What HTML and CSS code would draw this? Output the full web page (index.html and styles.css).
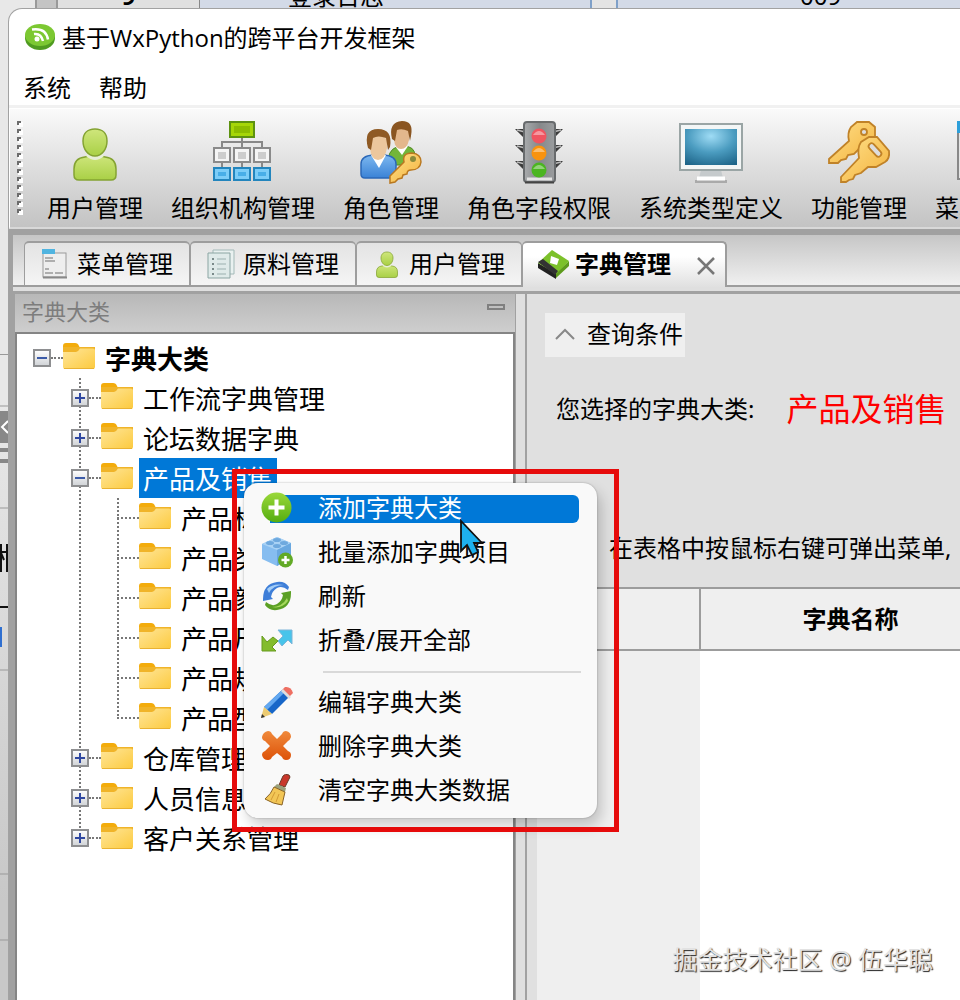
FILE: index.html
```html
<!DOCTYPE html>
<html lang="zh-CN">
<head>
<meta charset="utf-8">
<title>基于WxPython的跨平台开发框架</title>
<link rel="stylesheet" href="styles.css">
</head>
<body>
<svg class="defs" width="0" height="0" aria-hidden="true">
  <defs>
    <linearGradient id="gFolder" x1="0" y1="0" x2="1" y2="1"><stop offset="0" stop-color="#ffe69a"/><stop offset="1" stop-color="#fcca3e"/></linearGradient>
    <linearGradient id="gGreen" x1="0" y1="0" x2="0" y2="1"><stop offset="0" stop-color="#cfe67c"/><stop offset="1" stop-color="#a9d046"/></linearGradient>
    <linearGradient id="gBox" x1="0" y1="0" x2="0" y2="1"><stop offset="0" stop-color="#fff"/><stop offset="1" stop-color="#cfd2d6"/></linearGradient>
    <linearGradient id="gKey" x1="0" y1="0" x2="1" y2="1"><stop offset="0" stop-color="#ffe08a"/><stop offset="1" stop-color="#f3b23c"/></linearGradient>
    <radialGradient id="gScreen" cx=".5" cy=".2" r=".9"><stop offset="0" stop-color="#9fdcf5"/><stop offset=".5" stop-color="#4b9cc0"/><stop offset="1" stop-color="#1d6488"/></radialGradient>
    <linearGradient id="gBlue" x1="0" y1="0" x2="0" y2="1"><stop offset="0" stop-color="#7db8f0"/><stop offset="1" stop-color="#3a82d6"/></linearGradient>
    <linearGradient id="gAdd" x1="0" y1="0" x2="0" y2="1"><stop offset="0" stop-color="#9ad83a"/><stop offset="1" stop-color="#55ad10"/></linearGradient>
    <linearGradient id="gOrange" x1="0" y1="0" x2="0" y2="1"><stop offset="0" stop-color="#f08a3c"/><stop offset="1" stop-color="#dd5208"/></linearGradient>
    <linearGradient id="gMetal" x1="0" y1="0" x2="1" y2="0"><stop offset="0" stop-color="#a9abad"/><stop offset=".5" stop-color="#85888a"/><stop offset="1" stop-color="#9b9d9f"/></linearGradient>
    <pattern id="gripDots" width="6" height="8" patternUnits="userSpaceOnUse"><rect x="1" y="1" width="5" height="5" fill="#fff"/><path d="M0 0h4v2H2v2H0z" fill="#6c6c6c"/></pattern>
    <symbol id="folder" viewBox="0 0 32 27"><path d="M0 3q0-3 3-3h9q3 0 4 3l1 2H0z" fill="#f3ac0c"/><path d="M0 4h32v18H0z" fill="#f0b429"/><path d="M0 9h13q2 0 4-3.500h13q2 0 2 2V24q0 2-2 2H2q-2 0-2-2z" fill="url(#gFolder)"/><path d="M1 25.500h30" stroke="#e9b233"/></symbol>
    <symbol id="plus" viewBox="0 0 18 18"><rect x="1" y="1" width="16" height="16" fill="url(#gBox)" stroke="#8e8f91" stroke-width="2"/><path d="M4 9h10M9 4v10" stroke="#3048a0" stroke-width="2"/></symbol>
    <symbol id="minus" viewBox="0 0 18 18"><rect x="1" y="1" width="16" height="16" fill="url(#gBox)" stroke="#8e8f91" stroke-width="2"/><path d="M4 9h10" stroke="#3c5ba8" stroke-width="2"/></symbol>
    <symbol id="user" viewBox="0 0 64 64"><path d="M11 54V48Q11 37 22 36q2 0 4-2h12q2 2 4 2 11 1 11 12v6q0 5-5 5H16q-5 0-5-5z" fill="url(#gGreen)" stroke="#84a332" stroke-width="1.500"/><path d="M23 35q9 8 18 0l-2-5H25z" fill="#e8efd8"/><path d="M32 8c8 0 12 5 12 12 0 8-5 15-12 15s-12-7-12-15c0-7 4-12 12-12z" fill="url(#gGreen)" stroke="#84a332" stroke-width="1.500"/></symbol>
  </defs>
</svg>

<div class="desktop">
  <div class="behind" aria-hidden="true">
    <div class="behind-top">
      <div class="behind-rail"></div>
      <div class="behind-cell"><b>9</b></div>
      <div class="behind-sheet"><span>登录日志</span><i></i><span>009</span></div>
    </div>
    <svg class="behind-side" width="8" height="1000" viewBox="0 0 8 1000">
      <path d="M0 354.500h8M0 406h8M0 508h8M0 670h8M0 874h8M0 940h8" stroke="#999"/>
      <rect y="411" width="8" height="32" fill="#888"/><path d="M8 421l-6 6 6 6" stroke="#fff" stroke-width="2" fill="none"/>
      <path d="M0 450h8M0 461h8" stroke="#888" stroke-width="4"/>
      <path d="M0 552h4M1 544v28M1 553l3 7M4 552h4M7 544v28" stroke="#111" stroke-width="2" fill="none"/>
      <path d="M0 607h8" stroke="#111" stroke-width="2"/><rect y="627" width="2" height="20" fill="#2f6fd0"/>
    </svg>
  </div>

  <main class="window">
    <header class="titlebar">
      <svg width="32" height="28" viewBox="0 0 32 28"><ellipse cx="16" cy="15" rx="15" ry="12" fill="#4f9b20"/><ellipse cx="16" cy="12" rx="15" ry="11" fill="#7cc832"/><circle cx="13" cy="16" r="2.500" fill="#fff"/><path d="M10 11q7-1 9 7M8 6.500q14-2 16 10" fill="none" stroke="#fff" stroke-width="2.500"/></svg>
      <h1>基于WxPython的跨平台开发框架</h1>
    </header>
    <nav class="menubar"><button>系统</button><button>帮助</button></nav>

    <div class="toolbar">
      <svg class="grip" width="6" height="96"><rect width="6" height="96" fill="url(#gripDots)"/></svg>
      <button class="tool"><svg width="64" height="64"><use href="#user"/></svg>用户管理</button>
      <button class="tool"><svg width="64" height="64" viewBox="0 0 64 64">
        <path d="M31 16v30M11 46V21h40v25" fill="none" stroke="#888" stroke-width="2"/>
        <rect x="19" y="1" width="24" height="15" fill="#a6d608" stroke="#5d9210" stroke-width="2"/><rect x="23" y="5" width="16" height="7" fill="#8cbd00"/>
        <g fill="#f4f4f4" stroke="#8a8a8a" stroke-width="2"><rect x="3" y="27" width="16" height="14"/><rect x="23" y="27" width="16" height="14"/><rect x="43" y="27" width="16" height="14"/></g>
        <path d="M7 31h8v7H7zM27 31h8v7h-8zM47 31h8v7h-8z" fill="#ccc"/>
        <g fill="#7ccdf8" stroke="#2385bd" stroke-width="2"><rect x="3" y="47" width="16" height="12"/><rect x="23" y="47" width="16" height="12"/><rect x="43" y="47" width="16" height="12"/></g>
        <path d="M7 51h8v4H7zM27 51h8v4h-8zM47 51h8v4h-8z" fill="#48aee8"/></svg>组织机构管理</button>
      <button class="tool"><svg width="64" height="64" viewBox="0 0 64 64">
        <path d="M29 38q2-13 15-13 12 0 12 10v9H29z" fill="#73b53a" stroke="#4f8a24"/><path d="M36 25h13l-6 9z" fill="#fff"/>
        <path d="M35 10q9-6 15 0v9q-2 9-8 9t-7-9z" fill="#e3b78c"/><path d="M33 18Q29 1 43 0q12 0 9 15l-1 5-2-10q-6-3-11-1l-2 11z" fill="#8a5521"/>
        <path d="M2 53V43q0-8 12-9h11q12 1 12 9v10q0 4-4 4H6q-4 0-4-4z" fill="url(#gBlue)" stroke="#2b68b8" stroke-width="1.500"/><path d="M12 34h15l-7 13z" fill="#fff"/>
        <path d="M11 18q9-6 17 0v9q-2 12-9 12t-8-12z" fill="#ecc79d"/><path d="M9 27Q4 8 19 8q15 0 12 18l-2 3-2-12q-8-3-13 0l-2 12z" fill="#8f5a24"/>
        <path d="M31 55l14-14q-2-9 8-9 9 1 9 9-1 8-10 8-4 0-4 4l-4 1-1 3-4 1-3 3-5 1z" fill="url(#gKey)" stroke="#b97820" stroke-width="1.500"/><circle cx="54" cy="38" r="3" fill="#8a8a3a"/></svg>角色管理</button>
      <button class="tool"><svg width="64" height="64" viewBox="0 0 64 64">
        <path d="M8 8l11 0v11l-4-4zM8 24l11 0v11l-4-4zM8 40l11 0v11l-4-4zM56 8l-11 0v11l4-4zM56 24l-11 0v11l4-4zM56 40l-11 0v11l4-4z" fill="#3c3c3c"/><path d="M10 9l8 2M10 25l8 2M10 41l8 2M54 9l-8 2M54 25l-8 2M54 41l-8 2" stroke="#bbb" stroke-width="1.500"/>
        <rect x="17" y="1" width="31" height="60" rx="3" fill="url(#gMetal)" stroke="#686b6d" stroke-width="2"/><path d="M20 58h25" stroke="#e4e4e4" stroke-width="3"/><path d="M18 61.500h29" stroke="#444" stroke-width="2"/>
        <circle cx="32" cy="15" r="7.500" fill="#ef5561"/><circle cx="32" cy="32" r="7.500" fill="#f8930f"/><circle cx="32" cy="49" r="7.500" fill="#4bb521"/>
        <path d="M26 14q6-8 12 0zM26 31q6-8 12 0zM26 48q6-8 12 0z" fill="#fff" opacity=".4"/></svg>角色字段权限</button>
      <button class="tool"><svg width="64" height="64" viewBox="0 0 64 64"><path d="M22 49h20l2 8H20z" fill="#c5cacc"/><path d="M16 60.500h32" stroke="#aaa" stroke-width="3"/><path d="M18 57.500h28" stroke="#fff" stroke-width="4"/><rect x="1" y="3" width="62" height="46" fill="#f3f6f6" stroke="#9aa5a5" stroke-width="2"/><rect x="6" y="8" width="52" height="36" fill="url(#gScreen)"/></svg>系统类型定义</button>
      <button class="tool"><svg width="64" height="64" viewBox="0 0 64 64" fill="url(#gKey)" stroke="#c08228" stroke-width="1.800">
        <path d="M2 38l20-18q-2-8 2-14l6-5h12l6 5v12l-7 9h-8l-6 6-6 1-2 4-5 1-3 3H2z"/><circle cx="37" cy="11" r="3" fill="#ddd"/>
        <path d="M14 56l18-19q-2-10 2-16l8-5h8l12 14q1 8-4 11l-9 5h-8l-7 6-6 2-2 4-4 1-3 2h-5z"/><rect x="40" y="26" width="16" height="6" rx="3" transform="rotate(48 48 29)" fill="#ddd"/></svg>功能管理</button>
      <button class="tool"><svg width="64" height="64" viewBox="0 0 64 64"><rect x="7" y="4" width="52" height="54" fill="#e4e4e4" stroke="#888" stroke-width="2"/><path d="M6 0h24v12H6z" fill="#2c9fda"/></svg>菜单管理</button>
    </div>

    <section class="workspace">
      <div class="tabs">
        <div class="tab"><svg width="28" height="32" viewBox="0 0 28 32"><rect x="2" y="5" width="23" height="24" fill="#eee" stroke="#9a9a9a"/><path d="M2 29.500h24" stroke="#888" stroke-width="2"/><path d="M1 1h13v5H1z" fill="#50b4e0"/><path d="M4 10h8M4 13h10M4 21h4M4 25h8M14 25h8" stroke="#999" stroke-width="1.500"/></svg><button>菜单管理</button></div>
        <div class="tab"><svg width="28" height="32" viewBox="0 0 28 32"><path d="M6 2h21v24H6z" fill="#e9f1f0" stroke="#a3b9b8"/><path d="M1 5h22v25H1z" fill="#dfeae9" stroke="#8ba5a3"/><path d="M5 11h2M5 16h2M5 21h2M5 26h2" stroke="#7a8a8a" stroke-width="2"/><path d="M10 11h9M10 16h9M10 21h9M10 26h9" stroke="#b3c4c2" stroke-width="1.500"/></svg><button>原料管理</button></div>
        <div class="tab"><svg width="28" height="32" viewBox="5 0 54 64"><use href="#user" width="64" height="64"/></svg><button>用户管理</button></div>
        <div class="tab active"><svg width="32" height="32" viewBox="0 0 32 32"><path d="M1 15v5l18 11v-6z" fill="#222"/><path d="M19 25v5L32 18v-5z" fill="#5d9a1c"/><path d="M15 2L32 13 19 26 1 15z" fill="#7cc12a"/><path d="M1 14l5-3 15 12-3 4z" fill="#333"/><path d="M14 8l8 3-2 6-7-2z" fill="#fff"/></svg><button>字典管理</button><button class="close" aria-label="关闭"><svg width="20" height="20" viewBox="0 0 20 20"><path d="M2 2l16 16M18 2L2 18" stroke="#777" stroke-width="2.500"/></svg></button></div>
      </div>
      <div class="panes">
        <aside class="tree-pane">
          <div class="pane-head"><h2>字典大类</h2><button class="collapse" aria-label="最小化"></button></div>
          <ul class="tree">
            <li><div class="row"><svg class="box"><use href="#minus"/></svg><i></i><svg class="folder"><use href="#folder"/></svg><b>字典大类</b></div>
              <ul class="level1">
                <li><div class="row"><svg class="box"><use href="#plus"/></svg><i></i><svg class="folder"><use href="#folder"/></svg><span>工作流字典管理</span></div></li>
                <li><div class="row"><svg class="box"><use href="#plus"/></svg><i></i><svg class="folder"><use href="#folder"/></svg><span>论坛数据字典</span></div></li>
                <li><div class="row"><svg class="box"><use href="#minus"/></svg><i></i><svg class="folder"><use href="#folder"/></svg><span class="selected">产品及销售</span></div>
                  <ul class="level2">
                    <li class="row"><i></i><svg class="folder"><use href="#folder"/></svg><span>产品标签</span></li>
                    <li class="row"><i></i><svg class="folder"><use href="#folder"/></svg><span>产品类型</span></li>
                    <li class="row"><i></i><svg class="folder"><use href="#folder"/></svg><span>产品颜色</span></li>
                    <li class="row"><i></i><svg class="folder"><use href="#folder"/></svg><span>产品尺寸</span></li>
                    <li class="row"><i></i><svg class="folder"><use href="#folder"/></svg><span>产品规格</span></li>
                    <li class="row"><i></i><svg class="folder"><use href="#folder"/></svg><span>产品型号</span></li>
                  </ul></li>
                <li><div class="row"><svg class="box"><use href="#plus"/></svg><i></i><svg class="folder"><use href="#folder"/></svg><span>仓库管理</span></div></li>
                <li><div class="row"><svg class="box"><use href="#plus"/></svg><i></i><svg class="folder"><use href="#folder"/></svg><span>人员信息</span></div></li>
                <li><div class="row"><svg class="box"><use href="#plus"/></svg><i></i><svg class="folder"><use href="#folder"/></svg><span>客户关系管理</span></div></li>
              </ul></li>
          </ul>
        </aside>
        <section class="detail">
          <button class="query"><svg width="20" height="12" viewBox="0 0 20 12"><path d="M1 11l9-9 9 9" fill="none" stroke="#888" stroke-width="2"/></svg>查询条件</button>
          <p class="chosen"><span>您选择的字典大类:</span><strong>产品及销售</strong></p>
          <p class="hint">在表格中按鼠标右键可弹出菜单,</p>
          <div class="sheet"><table><thead><tr><th class="corner"></th><th>字典名称</th></tr></thead></table></div>
        </section>
      </div>
    </section>
  </main>

  <div class="context" role="menu">
    <button role="menuitem" class="on"><svg viewBox="0 0 32 32"><circle cx="15.500" cy="15.500" r="15" fill="url(#gAdd)"/><path d="M15.500 7.500v16M7.500 15.500h16" stroke="#fff" stroke-width="4"/></svg>添加字典大类</button>
    <button role="menuitem"><svg viewBox="0 0 32 32"><path d="M1 8L16 1l14 6v15l-14 8L1 23z" fill="#86bdf0"/><path d="M1 8L16 1l14 6-14 7z" fill="#a9d2f5"/><path d="M16 14l14-7v15l-14 8z" fill="#6aa8e0"/><ellipse cx="9" cy="7" rx="4" ry="2" fill="#6fa9de"/><ellipse cx="16" cy="4" rx="4" ry="2" fill="#6fa9de"/><ellipse cx="23" cy="7" rx="4" ry="2" fill="#6fa9de"/><ellipse cx="16" cy="10" rx="4" ry="2" fill="#6fa9de"/><circle cx="24.500" cy="24" r="7.500" fill="#62aa26"/><path d="M24.500 20v8M20.500 24h8" stroke="#fff" stroke-width="2.500"/></svg>批量添加字典项目</button>
    <button role="menuitem"><svg viewBox="0 0 32 32"><path d="M2 19Q2 4 16 2q8-1 12 5l-1 3q-6-5-11-2-5 3-6 9l2 2-10 2z" fill="#3e7ed8"/><path d="M6 9q6-6 17-4-11 0-15 8z" fill="#a2cdf7"/><path d="M30 13q0 15-14 17-8 1-12-5l1-3q6 5 11 2 5-3 6-9l-2-2 10-2z" fill="#5ba024"/><path d="M27 21q-6 8-16 6 10 0 15-9z" fill="#a6d95c"/></svg>刷新</button>
    <button role="menuitem"><svg viewBox="0 0 32 32"><path d="M1 12v15h14l-4-4 6-6-5-4-6 5z" fill="#83bc2c" stroke="#669b1e"/><path d="M31 6v14l-4-4-6 6-4-5 5-5-5-6z" fill="#48c4ea" stroke="#7fb5d8"/></svg>折叠/展开全部</button>
    <hr>
    <button role="menuitem"><svg viewBox="0 0 32 32"><path d="M21 4l7 7-17 17-8-7z" fill="#1766c8"/><path d="M21 4l3 2L6 24l-3-3z" fill="#63a8f0"/><path d="M21 4l3-3q6-1 8 6l-4 4z" fill="#ee6f62"/><path d="M20 5l2-2 8 8-2 2z" fill="#ddd"/><path d="M3 21l8 7-11 4z" fill="#eccb72"/><path d="M1 28l3 3-4 1z" fill="#333"/></svg>编辑字典大类</button>
    <button role="menuitem"><svg viewBox="0 0 32 32"><path d="M7 1q3 0 4 3l5 5 5-5q1-3 4-3 5 1 5 6-1 3-3 4l-5 5 5 5q3 1 3 4 0 5-5 5-3 0-4-3l-5-4-5 4q-1 3-4 3-5 0-6-5 0-3 3-4l5-5-5-5q-3-1-3-4 1-5 6-6z" fill="url(#gOrange)"/></svg>删除字典大类</button>
    <button role="menuitem"><svg viewBox="0 0 32 32"><path d="M22 2q2-3 6-1 2 2 0 4l-4 8-6-2z" fill="#c9382c" stroke="#6a3b2a"/><path d="M16 10l9 4-1 4-11-5z" fill="#9aa07a"/><path d="M13 13l11 5-3 13Q12 30 4 25q6-5 9-12z" fill="#f2c656" stroke="#8a6326"/><path d="M14 18l-4 8M18 20l-3 8" stroke="#d29a35"/></svg>清空字典大类数据</button>
  </div>
  <div class="marker" aria-hidden="true"></div>
  <svg class="cursor" width="26" height="38" viewBox="0 0 26 38" aria-hidden="true"><path d="M2 2v30l6-6 5 10 6-3-4-9h8z" fill="#1eb0ee" stroke="#111" stroke-width="1.800"/></svg>
  <p class="watermark">掘金技术社区 @ 伍华聪</p>
</div>
</body>
</html>
```

FILE: styles.css
```css
* { box-sizing: border-box; }
body {
  margin: 0;
  font: 24px/30px "Noto Sans", "Noto Sans CJK SC", sans-serif;
  color: #000;
}
button {
  font: inherit;
  color: inherit;
  background: none;
  border: 0;
  padding: 0;
  white-space: nowrap;
}
h1, h2, p, ul { margin: 0; padding: 0; font-size: inherit; font-weight: 400; }
ul { list-style: none; }
svg { flex: none; }
.defs { position: absolute; }

.desktop {
  position: relative;
  display: flex;
  min-height: 100vh;
  padding: 8px 0 0 8px;
  overflow: hidden;
}

/* application lying behind the window */
.behind { position: absolute; inset: 0; background: linear-gradient(#e8e8e8 40%, #c8c8c8 90%); }
.behind-top { display: flex; height: 20px; padding-left: 35px; overflow: hidden; line-height: 24px; }
.behind-rail { flex: none; width: 23px; background: #c4c4c4; border: solid #999; border-width: 0 2px; }
.behind-cell { flex: none; display: flex; justify-content: center; width: 142px; background: #e0e0e0; border-right: 1px solid #888; }
.behind-sheet { flex: 1; display: flex; padding-left: 88px; background: #d3dae7; }
.behind-sheet i { width: 28px; margin: 0 182px 0 206px; background: #e4e4e4; border: solid #7fa0c8; border-width: 0 2px; }
.behind-top span, .behind-top b { margin-top: -16px; }
.behind-side { position: absolute; left: 0; top: 0; }

.window {
  position: relative;
  flex: 1;
  min-width: 0;
  display: flex;
  flex-direction: column;
  background: #fff;
  border: solid #a2a2a2;
  border-width: 1px 0 0 1px;
  border-top-left-radius: 14px;
  overflow: hidden;
}
.titlebar { display: flex; align-items: center; gap: 6px; height: 58px; padding: 0 0 2px 15px; }
.titlebar h1 { padding-top: 2px; font-family: "Open Sans", "Noto Sans CJK SC", sans-serif; }
.menubar { display: flex; gap: 28px; height: 41px; padding: 4px 0 0 14px; border-bottom: 3px solid #f1f1f1; }

.toolbar {
  display: flex;
  gap: 28px;
  padding: 12px 0 4px 7px;
  border: solid #fff;
  border-width: 1px 0 0 1px;
  border-bottom: 2px solid #d8d8d8;
  background: linear-gradient(#fafafa, #dedede 50%, #c3c3c3);
}
.grip { margin-right: -4px; }
.tool { display: flex; flex-direction: column; align-items: center; gap: 8px; }

.workspace { flex: 1; display: flex; flex-direction: column; border: solid #a1a1a1; border-width: 6px 0 0 4px; }
.tabs {
  display: flex;
  align-items: flex-end;
  height: 52px;
  padding-left: 11px;
  background: linear-gradient(#c6c6c6, #f0f0f0);
  border-bottom: 2px solid #9d9d9d;
}
.tab {
  display: flex;
  align-items: center;
  gap: 8px;
  height: 44px;
  padding: 0 16px;
  background: linear-gradient(#e3e3e3, #f5f5f5);
  border: solid #9d9d9d;
  border-width: 2px 1px 0;
  border-radius: 5px 5px 0 0;
}
.tab.active {
  gap: 6px;
  height: 46px;
  margin-bottom: -2px;
  padding: 0 9px 2px 14px;
  border-right-width: 2px;
  background: linear-gradient(#fff 30%, #e0e0e0);
  font-weight: 700;
}
.close { display: flex; margin-left: 19px; padding-top: 4px; }

.panes { flex: 1; display: flex; margin-top: 4px; border-top: 3px solid #a1a1a1; box-shadow: 0 -4px #dfdfdf; }
.tree-pane {
  flex: none;
  width: 503px;
  border: solid #a1a1a1;
  border-width: 0 1px 0 2px;
  display: flex;
  flex-direction: column;
}
.pane-head {
  display: flex;
  justify-content: space-between;
  height: 38px;
  padding: 2px 10px 0 7px;
  background: linear-gradient(#b8b8b8, #cecece);
  color: #7d7d7d;
  font-size: 22px;
}
.collapse { width: 18px; height: 6px; margin-top: 8px; border: 2px solid #808080; }
.tree {
  flex: 1;
  padding: 4px 0 0 16px;
  background: #fff;
  border: 2px solid #858585;
  border-bottom: 0;
  font-size: 26px;
}
.row { display: flex; align-items: center; height: 40px; }
.row i { width: 12px; border-top: 2px dotted #777; }
.box { width: 18px; height: 18px; position: relative; }
.folder { width: 32px; height: 27px; margin: 0 6px 4px 0; }
.row span, .row b { height: 40px; padding: 0 4px; line-height: 42px; white-space: nowrap; }
.selected { color: #fff; background: #0078d7; }
.level1, .level2 {
  background-image: linear-gradient(#777 50%, transparent 50%);
  background-size: 2px 4px;
  background-repeat: repeat-y;
  background-position: 46px 0;
}
.level1 { padding-left: 38px; }
.level2 { padding-left: 46px; }
/* the trunk line stops at the last branch */
.level1 > li:last-child { margin-left: -38px; padding-left: 38px; background: linear-gradient(#fff, #fff) 40px 20px / 12px 20px no-repeat; }
.level2 > li:last-child { margin-left: -46px; padding-left: 46px; background: linear-gradient(#fff, #fff) 40px 21px / 12px 20px no-repeat; }
.level2 .row i { width: 22px; }

.detail {
  flex: 1;
  min-width: 0;
  display: flex;
  flex-direction: column;
  align-items: flex-start;
  margin-left: 9px;
  padding: 19px 0 0 10px;
  border-left: 2px solid #a1a1a1;
  background: #e0e0e0;
  box-shadow: -9px 0 #dfdfdf;
  overflow: hidden;
}
.query { display: flex; align-items: center; gap: 12px; height: 44px; margin-left: 8px; padding: 0 2px 2px 10px; background: #efefef; }
.chosen { display: flex; align-items: center; gap: 32px; height: 60px; margin: 22px 0 0 19px; white-space: nowrap; }
.chosen strong { color: #f00; font-size: 32px; font-weight: 400; }
.hint { margin: 94px 0 0 72px; white-space: nowrap; }
.sheet {
  flex: 1;
  align-self: stretch;
  margin-top: 24px;
  background: linear-gradient(to right, #efefef 163px, #fff 163px);
}
table { width: 463px; border-collapse: collapse; table-layout: fixed; }
th { height: 62px; padding: 0; background: #efefef; border: solid #9c9c9c; border-width: 2px 0; }
.corner { width: 163px; border-right-width: 2px; }

.context {
  position: absolute;
  left: 244px;
  top: 483px;
  width: 353px;
  display: flex;
  flex-direction: column;
  gap: 16px;
  padding: 12px 18px 13px;
  background: #f9f9f9;
  border-radius: 14px;
  box-shadow: 4px 8px 14px rgba(0, 0, 0, .2), 0 0 2px rgba(0, 0, 0, .3);
}
.context button { display: flex; align-items: center; gap: 25px; height: 28px; padding-bottom: 2px; border-radius: 6px; }
.context svg { width: 32px; height: 32px; margin-left: -1px; }
.context .on { color: #fff; background: linear-gradient(to right, transparent 8px, #0078d7 8px); }
.context hr { width: 258px; height: 2px; margin: 0 -2px 0 auto; border: 0; background: #d9d9d9; }

.marker { position: absolute; left: 232px; top: 469px; width: 387px; height: 363px; border: 5px solid #e60b0b; }
.cursor { position: absolute; left: 459px; top: 519px; }
.watermark {
  position: absolute;
  right: 27px;
  bottom: 26px;
  color: #e2e2e2;
  font-size: 25px;
  text-shadow: 1px 1px 1px #222;
}
```
